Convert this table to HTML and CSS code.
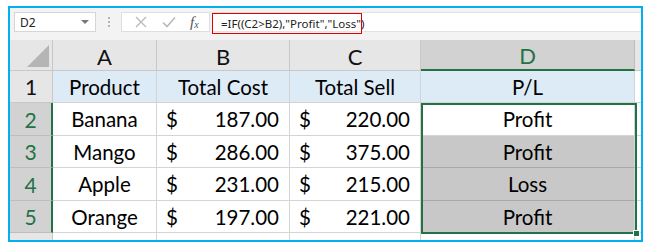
FILE: index.html
```html
<!DOCTYPE html>
<html>
<head>
<meta charset="utf-8">
<link rel="stylesheet" href="styles.css">
</head>
<body>
<div class="frame">
  <div class="fbar">
    <div class="namebox"><span>D2</span><span class="caret"></span></div>
    <div class="dots"><i></i><i></i><i></i></div>
    <div class="btns">
      <svg class="ic" width="14" height="14" viewBox="0 0 14 14"><path d="M2 2 L12 12 M12 2 L2 12" stroke="#b9b9b9" stroke-width="1.3" fill="none"/></svg>
      <svg class="ic" width="16" height="14" viewBox="0 0 16 14"><path d="M2 7.5 L6 11.5 L14 2.5" stroke="#b9b9b9" stroke-width="1.6" fill="none"/></svg>
      <span class="fx"><i>f</i><sub>x</sub></span>
    </div>
    <div class="formula"><span class="ftext">=IF((C2&gt;B2),"Profit","Loss")</span></div>
  </div>
  <div class="sheet">
    <div class="grid">
      <div class="corner"><span class="tri"></span></div>
      <div class="ch">A</div>
      <div class="ch">B</div>
      <div class="ch">C</div>
      <div class="ch sel">D</div>
      <div class="ch end"></div>

      <div class="rh">1</div>
      <div class="c hd">Product</div>
      <div class="c hd">Total Cost</div>
      <div class="c hd">Total Sell</div>
      <div class="c hd">P/L</div>
      <div class="c end"></div>

      <div class="rh sel">2</div>
      <div class="c">Banana</div>
      <div class="c num"><span>$</span><span>187.00</span></div>
      <div class="c num"><span>$</span><span>220.00</span></div>
      <div class="c">Profit</div>
      <div class="c end"></div>

      <div class="rh sel">3</div>
      <div class="c">Mango</div>
      <div class="c num"><span>$</span><span>286.00</span></div>
      <div class="c num"><span>$</span><span>375.00</span></div>
      <div class="c shade">Profit</div>
      <div class="c end"></div>

      <div class="rh sel">4</div>
      <div class="c">Apple</div>
      <div class="c num"><span>$</span><span>231.00</span></div>
      <div class="c num"><span>$</span><span>215.00</span></div>
      <div class="c shade">Loss</div>
      <div class="c end"></div>

      <div class="rh sel">5</div>
      <div class="c">Orange</div>
      <div class="c num"><span>$</span><span>197.00</span></div>
      <div class="c num"><span>$</span><span>221.00</span></div>
      <div class="c shade">Profit</div>
      <div class="c end"></div>

      <div class="rh last"></div>
      <div class="c last"></div>
      <div class="c last"></div>
      <div class="c last"></div>
      <div class="c last"></div>
      <div class="c end last"></div>
    </div>
    <div class="selbox"><span class="handle"></span></div>
  </div>
</div>
</body>
</html>
```

FILE: styles.css
```css
* { box-sizing: border-box; }
html, body { margin: 0; padding: 0; background: #fff; }
body { padding: 6px 0 0 8px; font-family: "Lato", "Liberation Sans", sans-serif; }

.frame {
  width: 635px;
  height: 236px;
  border: 2px solid #00b0f0;
  background: #e6e6e6;
  display: flex;
  flex-direction: column;
  overflow: hidden;
}

.fbar {
  height: 32px;
  background: #f3f3f3;
  display: flex;
  align-items: flex-start;
  padding: 4px 0 0 4px;
  flex: none;
}
.namebox {
  width: 82px;
  height: 20px;
  background: #fff;
  border: 1px solid #d6d6d6;
  display: flex;
  align-items: center;
  justify-content: space-between;
  padding: 0 6px 0 5px;
  font-family: "Noto Sans", "Liberation Sans", sans-serif;
  font-size: 12px;
  color: #222;
}
.caret {
  width: 0; height: 0;
  border-left: 4px solid transparent;
  border-right: 4px solid transparent;
  border-top: 4px solid #777;
}
.dots {
  width: 25px;
  height: 20px;
  display: flex;
  flex-direction: column;
  align-items: center;
  justify-content: center;
  gap: 2px;
}
.dots i { width: 2px; height: 2px; background: #b5b5b5; display: block; }
.btns {
  width: 89px;
  height: 20px;
  background: #fff;
  border: 1px solid #dedede;
  display: flex;
  align-items: center;
  justify-content: space-around;
  padding: 0 4px 0 6px;
}
.fx {
  font-family: "Liberation Serif", serif;
  font-size: 15px;
  color: #555;
  line-height: 1;
}
.fx sub { font-size: 10px; font-style: italic; vertical-align: -1px; }
.formula {
  flex: 1;
  height: 20px;
  margin-left: 2px;
  background: #fff;
  border-top: 1px solid #e2e2e2;
  border-bottom: 1px solid #e2e2e2;
  display: flex;
  align-items: flex-start;
}
.ftext {
  height: 21px;
  border: 1.5px solid #e00000;
  padding: 2px 4px 0 8px;
  font-family: "Noto Sans", "Liberation Sans", sans-serif;
  font-size: 11.5px;
  color: #222;
  width: 150px;
  white-space: nowrap;
}

.sheet { position: relative; flex: 1; }
.grid {
  display: grid;
  grid-template-columns: 43px 104px 133px 131px 214px 6px;
  grid-template-rows: 31px 32px 33px 32px 33px 32px 7px;
  font-size: 20.5px;
  color: #000;
}
.corner {
  background: #e6e6e6;
  border-right: 1px solid #c8c8c8;
  border-bottom: 1px solid #c8c8c8;
  position: relative;
}
.tri {
  position: absolute;
  right: 3px;
  bottom: 3px;
  width: 0; height: 0;
  border-left: 22px solid transparent;
  border-bottom: 22px solid #b5b5b5;
}
.ch {
  background: #e6e6e6;
  border-right: 1px solid #c8c8c8;
  border-bottom: 1px solid #c8c8c8;
  display: flex;
  align-items: center;
  justify-content: center;
  font-size: 22px;
  color: #111;
  padding-top: 2px;
}
.ch.sel { background: #d2d2d2; color: #217346; border-bottom: 2px solid #217346; border-right-color: #bdbdbd; }
.ch.end { background: #e6e6e6; border-right: none; }
.rh {
  background: #e6e6e6;
  border-right: 1px solid #c8c8c8;
  border-bottom: 1px solid #c8c8c8;
  display: flex;
  align-items: center;
  justify-content: center;
  font-size: 21px;
  color: #111;
}
.rh.sel { background: #d2d2d2; color: #217346; border-right: 2px solid #217346; border-bottom-color: #bdbdbd; }
.rh.last { border-bottom: none; }
.c {
  background: #fff;
  border-right: 1px solid #d4d4d4;
  border-bottom: 1px solid #d4d4d4;
  display: flex;
  align-items: center;
  justify-content: center;
  white-space: nowrap;
}
.c.hd { background: #ddebf7; }
.c.end { background: #fff; border-right: none; }
.c.last { border-bottom: none; }
.c.num { justify-content: space-between; padding: 0 10px 0 9px; }
.c.shade { background: #c8c8c8; border-bottom-color: #a8a8a8; }

.selbox {
  position: absolute;
  left: 411px;
  top: 63px;
  width: 216px;
  height: 131px;
  border: 2px solid #217346;
  pointer-events: none;
}
.handle {
  position: absolute;
  right: -5px;
  bottom: -5px;
  width: 7px;
  height: 7px;
  background: #217346;
  border: 1px solid #fff;
}
```
